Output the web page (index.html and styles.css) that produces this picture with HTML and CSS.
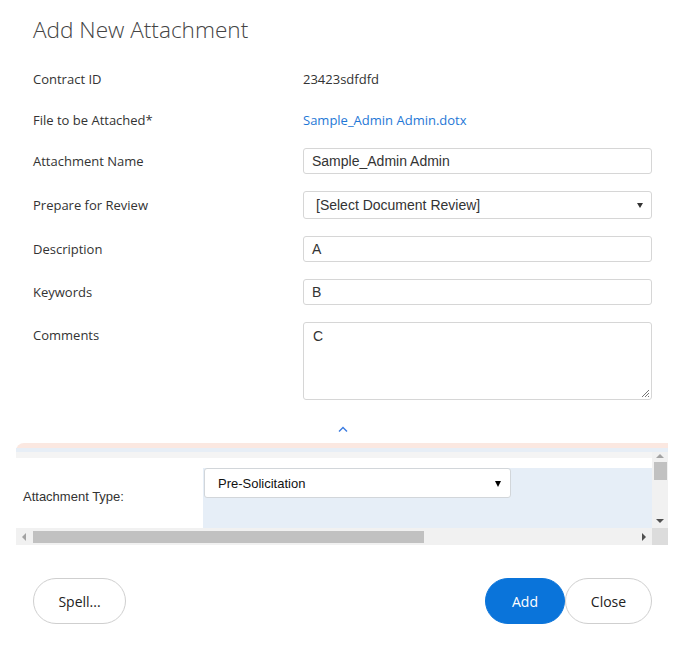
FILE: index.html
```html
<!DOCTYPE html>
<html>
<head>
<meta charset="utf-8">
<link rel="stylesheet" href="styles.css">
</head>
<body>
<div class="dialog">
  <h1 class="title">Add New Attachment</h1>
  <div class="form">
    <div class="row r-text">
      <div class="label">Contract ID</div>
      <div class="value">23423sdfdfd</div>
    </div>
    <div class="row r-text">
      <div class="label">File to be Attached*</div>
      <div class="value"><a class="link">Sample_Admin Admin.dotx</a></div>
    </div>
    <div class="row r-input">
      <div class="label">Attachment Name</div>
      <div class="input">Sample_Admin Admin</div>
    </div>
    <div class="row r-select">
      <div class="label">Prepare for Review</div>
      <div class="input select"><span>[Select Document Review]</span><span class="tri"></span></div>
    </div>
    <div class="row r-input">
      <div class="label">Description</div>
      <div class="input">A</div>
    </div>
    <div class="row r-input">
      <div class="label">Keywords</div>
      <div class="input">B</div>
    </div>
    <div class="row r-area">
      <div class="label top">Comments</div>
      <div class="input area">C
        <svg class="grip" width="9" height="9" viewBox="0 0 9 9"><path d="M8 1 L1 8 M8 4 L4 8 M8 7 L7 8" stroke="#777" stroke-width="1"/></svg>
      </div>
    </div>
  </div>
  <div class="collapse">
    <svg width="10" height="6" viewBox="0 0 10 6"><polyline points="1,5.5 5,1.5 9,5.5" fill="none" stroke="#3a7be0" stroke-width="1.4"/></svg>
  </div>
</div>

<div class="panel">
  <div class="panel-body">
    <div class="pane">
      <div class="stripe-blue"></div>
      <div class="stripe-gray"></div>
      <div class="pane-white"></div>
      <div class="pane-row">
        <div class="pane-label">Attachment Type:</div>
        <div class="pane-field">
          <div class="type-select"><span>Pre-Solicitation</span><span class="tri big"></span></div>
        </div>
      </div>
    </div>
    <div class="vscroll">
      <span class="arr up"></span>
      <span class="vthumb"></span>
      <span class="arr down"></span>
    </div>
    <div class="hscroll">
      <span class="arr left"></span>
      <span class="hthumb"></span>
      <span class="arr right"></span>
    </div>
    <div class="corner"></div>
  </div>
</div>

<div class="buttons">
  <button class="btn">Spell...</button>
  <div class="right">
    <button class="btn primary">Add</button>
    <button class="btn">Close</button>
  </div>
</div>
</body>
</html>
```

FILE: styles.css
```css
* { box-sizing: border-box; }
html, body { margin: 0; padding: 0; background: #fff; }
body { width: 684px; height: 654px; font-family: "Open Sans", "Noto Sans", sans-serif; color: #333; overflow: hidden; }

.dialog { padding: 0 32px 0 33px; }
.title {
  margin: 0; padding-top: 14px; height: 66px;
  font-family: "Open Sans", sans-serif; font-weight: 300; font-size: 22.6px; line-height: 32px; color: #444;
}
.form { display: flex; flex-direction: column; }
.row { display: grid; grid-template-columns: 270px 1fr; align-items: center; font-size: 13px; }
.r-text { height: 26px; margin-bottom: 15px; }
.r-input { height: 26px; margin-bottom: 17px; }
.r-select { height: 28px; margin-bottom: 17px; }
.r-area { height: 78px; align-items: start; }
.label { line-height: 16px; color: #333; }
.label.top { padding-top: 5px; }
.value { line-height: 16px; color: #333; }
.link { color: #1f78d6; text-decoration: none; }

.input {
  height: 100%; border: 1px solid #d6d6d6; border-radius: 3px; background: #fff;
  font-family: "Liberation Sans", Arial, sans-serif; font-size: 14px; color: #333;
  padding: 0 8px; display: flex; align-items: center;
}
.select { justify-content: space-between; padding: 0 8px 0 12px; }
.tri { width: 0; height: 0; border-left: 3px solid transparent; border-right: 3px solid transparent; border-top: 5px solid #333; margin-top: 1px; }
.tri.big { border-left-width: 3px; border-right-width: 3px; border-top-width: 6px; border-top-color: #000; margin-right: 2px; }
.area { align-items: flex-start; padding: 5px 9px; position: relative; }
.grip { position: absolute; right: 1px; bottom: 1px; }

.collapse { height: 43px; display: flex; justify-content: center; align-items: center; padding-top: 14px; }

.panel { margin: 0 16px; }
.panel-body {
  display: grid; grid-template-columns: 636px 16px; grid-template-rows: 80px 17px;
  border-top: 5px solid #fbe8e1; border-top-left-radius: 8px;
}
.pane { display: flex; flex-direction: column; overflow: hidden; }
.stripe-blue { height: 4px; background: #e7eef6; }
.stripe-gray { height: 6px; background: #f4f4f4; }
.pane-white { height: 10px; background: #fff; }
.pane-row { display: grid; grid-template-columns: 187px 1fr; height: 60px; }
.pane-label {
  font-family: "Liberation Sans", Arial, sans-serif; font-size: 13px; color: #333;
  padding: 21px 0 0 7px;
}
.pane-field { background: #e6eef7; }
.type-select {
  width: 307px; height: 30px; margin-left: 1px; background: #fff; border: 1px solid #d2d6da; border-radius: 3px;
  display: flex; align-items: center; justify-content: space-between; padding: 0 7px 0 13px;
  font-family: "Liberation Sans", Arial, sans-serif; font-size: 13px; color: #111;
}

.vscroll { background: #f1f1f1; display: flex; flex-direction: column; align-items: center; position: relative; border-top: 4px solid #e7eef6; }
.arr { width: 0; height: 0; display: block; }
.arr.up { border-left: 4px solid transparent; border-right: 4px solid transparent; border-bottom: 4px solid #a3a3a3; margin-top: 2px; }
.vthumb { width: 13px; height: 18px; background: #c1c1c1; margin-top: 4px; }
.arr.down { border-left: 4px solid transparent; border-right: 4px solid transparent; border-top: 4px solid #505050; margin-top: auto; margin-bottom: 5px; }
.hscroll { background: #f1f1f1; display: flex; align-items: center; padding-left: 6px; }
.arr.left { border-top: 4px solid transparent; border-bottom: 4px solid transparent; border-right: 4px solid #a3a3a3; }
.hthumb { width: 391px; height: 12px; background: #c1c1c1; margin-left: 7px; }
.arr.right { border-top: 4px solid transparent; border-bottom: 4px solid transparent; border-left: 4px solid #505050; margin-left: auto; margin-right: 6px; }
.corner { background: #dcdcdc; }

.buttons { display: flex; justify-content: space-between; padding: 33px 32px 0 33px; }
.right { display: flex; }
.btn {
  height: 46px; border-radius: 23px; border: 1px solid #cfcfcf; background: #fff;
  font-family: "Open Sans", sans-serif; font-size: 14px; color: #222; padding: 0; cursor: pointer;
}
.buttons > .btn { width: 93px; }
.btn.primary { width: 80px; background: #0a74da; border-color: #0a74da; color: #fff; }
.right .btn:last-child { width: 87px; }
```
